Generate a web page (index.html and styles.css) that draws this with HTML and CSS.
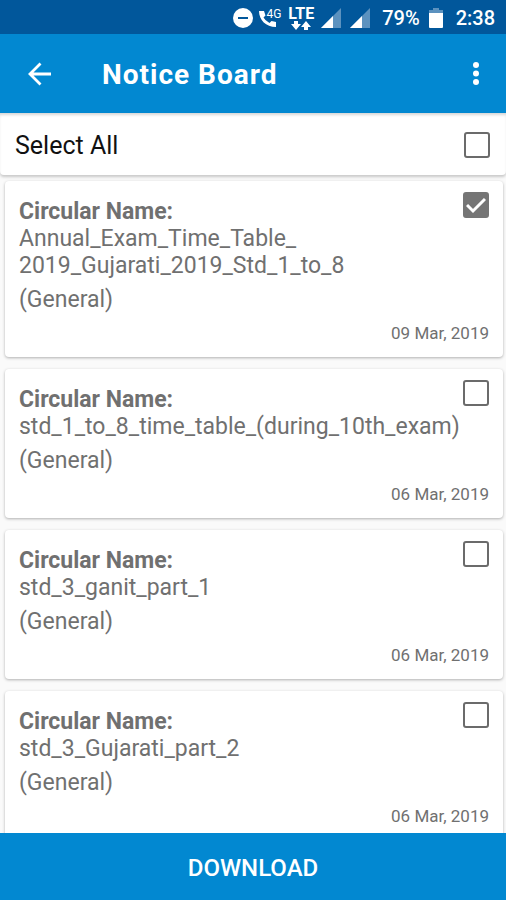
FILE: index.html
```html
<!DOCTYPE html>
<html lang="en">
<head>
<meta charset="utf-8">
<meta name="viewport" content="width=device-width, initial-scale=1">
<title>Notice Board</title>
<link rel="stylesheet" href="styles.css">
</head>
<body>
<div class="status">
  <svg width="20" height="20" viewBox="0 0 20 20"><circle cx="10" cy="10" r="10" fill="#fff"/><path d="M5 10h10" stroke="#01579b" stroke-width="2"/></svg>
  <div class="call">
    <svg width="22" height="20" viewBox="0 0 22 20"><path d="M0 3C0 12 7 19 17 19V14L12.500 13L10.500 15Q6 12.500 4.500 9.500L6.500 7.500L5 3Z" fill="#fff"/></svg>
    <span class="call-net">4G</span>
  </div>
  <div class="lte">
    <span>LTE</span>
    <svg width="20" height="9" viewBox="0 0 20 9" fill="#fff"><path d="M3 0h4v3h3L5 9 0 3h3zM13 9h4V6h3l-5-6-5 6h3z"/></svg>
  </div>
  <svg class="signal" width="20" height="20" viewBox="0 0 20 20"><path d="M0 20L20 0V20Z" fill="#5c92bf"/><path d="M0 20L12 8V20Z" fill="#fff"/></svg>
  <svg class="signal" width="20" height="20" viewBox="0 0 20 20"><path d="M0 20L20 0V20Z" fill="#5c92bf"/><path d="M0 20L12 8V20Z" fill="#fff"/></svg>
  <span class="level">79%</span>
  <svg class="battery" width="14" height="20" viewBox="0 0 14 20"><path d="M0 2h4V0h6v2h4v5H0z" fill="#5c92bf"/><path d="M0 5h14v14q0 1-1 1H1q-1 0-1-1z" fill="#fff"/></svg>
  <span>2:38</span>
</div>
<header class="appbar">
  <button class="icon-button" aria-label="Back"><svg width="24" height="24" viewBox="0 0 24 24" fill="none" stroke="#fff" stroke-width="2.800"><path d="M23 12H2M12.500 1.500L2 12L12.500 22.500"/></svg></button>
  <h1>Notice Board</h1>
  <button class="icon-button" aria-label="More options"><svg width="24" height="24" viewBox="0 0 24 24" fill="#fff"><circle cx="12" cy="3" r="3"/><circle cx="12" cy="11.500" r="3"/><circle cx="12" cy="20" r="3"/></svg></button>
</header>
<div class="select-all">
  <label for="all">Select All</label>
  <input type="checkbox" id="all">
</div>
<main class="list">
  <article class="card">
    <div class="card-head">
      <label for="c1"><strong>Circular Name:</strong><br>Annual_Exam_Time_Table_<br>2019_Gujarati_2019_Std_1_to_8</label>
      <input type="checkbox" id="c1" checked>
    </div>
    <p class="group">(General)</p>
    <time class="date" datetime="2019-03-09">09 Mar, 2019</time>
  </article>
  <article class="card">
    <div class="card-head">
      <label for="c2"><strong>Circular Name:</strong><br>std_1_to_8_time_table_(during_10th_exam)</label>
      <input type="checkbox" id="c2">
    </div>
    <p class="group">(General)</p>
    <time class="date" datetime="2019-03-06">06 Mar, 2019</time>
  </article>
  <article class="card">
    <div class="card-head">
      <label for="c3"><strong>Circular Name:</strong><br>std_3_ganit_part_1</label>
      <input type="checkbox" id="c3">
    </div>
    <p class="group">(General)</p>
    <time class="date" datetime="2019-03-06">06 Mar, 2019</time>
  </article>
  <article class="card">
    <div class="card-head">
      <label for="c4"><strong>Circular Name:</strong><br>std_3_Gujarati_part_2</label>
      <input type="checkbox" id="c4">
    </div>
    <p class="group">(General)</p>
    <time class="date" datetime="2019-03-06">06 Mar, 2019</time>
  </article>
</main>
<button class="download">DOWNLOAD</button>
</body>
</html>
```
FILE: styles.css
```css
* {
  box-sizing: border-box;
}

body {
  margin: 0;
  height: 100vh;
  display: flex;
  flex-direction: column;
  background: #fafafa;
  color: #707070;
  font-family: Roboto, "Liberation Sans", sans-serif;
  font-size: 23px;
  line-height: 27px;
}

button {
  border: 0;
  padding: 0;
  background: none;
  color: #fff;
  font-family: inherit;
}

svg {
  display: block;
}

.status {
  flex: none;
  display: flex;
  align-items: center;
  justify-content: flex-end;
  height: 34px;
  padding: 2px 11px 0 0;
  background: #01579b;
  color: #fff;
  font-size: 20px;
  font-weight: 500;
}

.call {
  position: relative;
  margin: 0 7px 0 6px;
}

.call-net {
  position: absolute;
  top: 0;
  right: 0;
  font-size: 12px;
  font-weight: 400;
  line-height: 12px;
}

.lte {
  display: flex;
  flex-direction: column;
  align-items: center;
  margin-right: 7px;
  font-size: 16px;
  font-weight: 700;
  line-height: 14px;
}

.signal {
  margin-right: 9px;
}

.level {
  margin: 0 9px 0 3px;
}

.battery {
  margin-right: 13px;
}

.appbar {
  flex: none;
  display: flex;
  align-items: center;
  height: 79px;
  padding: 0 18px 0 28px;
  background: #0288d1;
  color: #fff;
}

.appbar h1 {
  flex: 1;
  margin: 0 0 0 50px;
  padding-top: 2px;
  font-size: 28px;
  font-weight: 700;
  letter-spacing: 1px;
}

.select-all {
  position: relative;
  flex: none;
  display: flex;
  align-items: center;
  justify-content: space-between;
  height: 62px;
  padding: 2px 16px 0 15px;
  background: #fff;
  border-radius: 0 0 4px 4px;
  box-shadow: 0 2px 3px rgba(0, 0, 0, 0.2), inset 0 3px 3px -1px rgba(0, 0, 0, 0.16);
  color: #111;
  font-size: 25px;
}

input {
  appearance: none;
  flex: none;
  width: 26px;
  height: 26px;
  margin: 0;
  border: 2px solid #6b6b6b;
  border-radius: 3px;
}

input:checked {
  border-color: #757575;
  background: #757575 url("data:image/svg+xml,%3Csvg xmlns='http://www.w3.org/2000/svg' viewBox='0 0 20 20' fill='none' stroke='white' stroke-width='3'%3E%3Cpath d='M1 10L7 16L19 4'/%3E%3C/svg%3E") center / 20px 20px no-repeat;
}

.list {
  flex: 1;
  min-height: 0;
  display: flex;
  flex-direction: column;
  gap: 12px;
  padding: 6px 3px 12px 5px;
  overflow-y: auto;
  scrollbar-width: none;
}

.card {
  flex: none;
  display: flex;
  flex-direction: column;
  padding: 17px 14px 14px;
  background: #fff;
  border-radius: 4px;
  box-shadow: 0 1px 3px rgba(0, 0, 0, 0.3);
}

.card-head {
  display: flex;
  justify-content: space-between;
}

.card-head input {
  margin-top: -6px;
}

.card-head label {
  white-space: nowrap;
}

.group {
  margin: 7px 0 10px;
}

.date {
  align-self: flex-end;
  font-size: 17px;
  line-height: 20px;
}

.download {
  flex: none;
  height: 67px;
  padding-top: 2px;
  background: #0288d1;
  font-size: 24px;
  font-weight: 500;
}
```
